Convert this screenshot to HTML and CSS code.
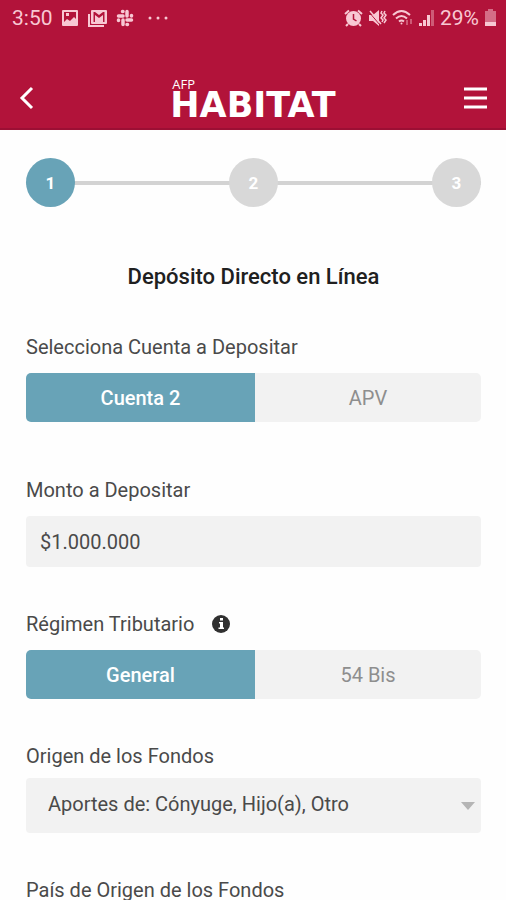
FILE: index.html
```html
<!DOCTYPE html>
<html lang="es">
<head>
<meta charset="utf-8">
<meta name="viewport" content="width=device-width, initial-scale=1">
<title>Depósito Directo en Línea</title>
<link rel="stylesheet" href="styles.css">
</head>
<body>
<header class="top">
  <div class="status">
    <div class="status-group status-left">
      <span class="clock">3:50</span>
      <svg width="18" height="18" viewBox="0 0 18 18"><path fill="currentColor" fill-rule="evenodd" d="M2 1h14a1 1 0 0 1 1 1v14a1 1 0 0 1-1 1H2a1 1 0 0 1-1-1V2a1 1 0 0 1 1-1zM3 3v10l3-3 3 2 4-4 2 2V3zM5 4h3v3H5z"/></svg>
      <svg width="21" height="19" viewBox="0 0 21 19"><path fill="none" stroke="currentColor" stroke-width="2" d="M2 5v12h15"/><path fill="currentColor" fill-rule="evenodd" d="M5 1h14a1 1 0 0 1 1 1v12a1 1 0 0 1-1 1H5a1 1 0 0 1-1-1V2a1 1 0 0 1 1-1zM6.500 3v10H8V6l4 3 4-3v7h1.500V3H16l-4 3-4-3z"/></svg>
      <svg width="18" height="18" viewBox="0 0 18 18" fill="none" stroke="currentColor" stroke-width="3.500" stroke-linecap="round"><path d="M7 7H2.500M11 7V2.500M11 11h4.500M7 11v4.500"/><path d="M6.500 2.500h.5M15.500 6.500v.5M11 15.500h.5M2.500 11v.5"/></svg>
      <svg class="more" width="20" height="4" viewBox="0 0 20 4" fill="currentColor"><circle cx="2" cy="2" r="1.500"/><circle cx="10" cy="2" r="1.500"/><circle cx="18" cy="2" r="1.500"/></svg>
    </div>
    <div class="status-group">
      <svg width="19" height="18" viewBox="0 0 19 18"><circle cx="9.500" cy="9.500" r="7.500" fill="currentColor"/><path d="M9.500 5v5l3 2" fill="none" stroke="#b2133a" stroke-width="1.500"/><path d="M1 5l4-3.500M18 5l-4-3.500M4 15l-2 2M15 15l2 2" stroke="currentColor" stroke-width="2"/></svg>
      <svg width="19" height="18" viewBox="0 0 19 18"><path fill="currentColor" d="M1 6h4l6-5v16l-6-5H1z"/><path d="M1 3l11 13" stroke="#b2133a" stroke-width="1"/><path d="M2 2l11 13" stroke="currentColor" stroke-width="1.500"/><path d="M14 2l-1 2 2 2-2 3 2 2-1 2M17 2l-1 2 2 2-2 3 2 2-2 3" fill="none" stroke="currentColor" stroke-width="1.500"/></svg>
      <svg width="22" height="18" viewBox="0 0 22 18" fill="none" stroke="currentColor" stroke-width="2"><path d="M1 6q8.500-8 17 0M4 9.500q5.500-5 11 0M7 12.500q2.500-2 5 0"/><circle cx="9.500" cy="14.500" r="1" fill="currentColor" stroke="none"/><path d="M15 11v5M19 10v5" opacity=".4"/></svg>
      <svg width="16" height="18" viewBox="0 0 16 18" fill="currentColor"><path d="M0 14h3v3H0zM4 11h3v6H4zM8 6h3v11H8z"/><path d="M12 1h3v16h-3z" opacity=".4"/></svg>
      <span class="battery-text">29%</span>
      <svg width="13" height="18" viewBox="0 0 13 18" fill="currentColor"><path opacity=".5" d="M4 0h5v2h3v11H1V2h3z"/><path d="M1 13h11v4H1z"/></svg>
    </div>
  </div>
  <nav class="bar">
    <button class="icon-button" type="button" aria-label="Volver"><svg width="15" height="24" viewBox="0 0 15 24"><path d="M13 2L3 12l10 10" fill="none" stroke="currentColor" stroke-width="3"/></svg></button>
    <a class="logo" href="#">
      <span class="logo-afp">AFP</span>
      <span class="logo-name">HABITAT</span>
    </a>
    <button class="icon-button" type="button" aria-label="Menú"><svg width="23" height="24" viewBox="0 0 23 24"><path d="M0 3h23M0 12h23M0 21h23" stroke="currentColor" stroke-width="3"/></svg></button>
  </nav>
</header>
<main class="content">
  <ol class="steps">
    <li class="step active">1</li>
    <li class="step">2</li>
    <li class="step">3</li>
  </ol>
  <h1 class="title">Depósito Directo en Línea</h1>
  <form class="form">
    <section class="field account" role="group" aria-labelledby="account-label">
      <span class="label" id="account-label">Selecciona Cuenta a Depositar</span>
      <div class="segments">
        <button class="segment selected" type="button" aria-pressed="true">Cuenta 2</button>
        <button class="segment" type="button" aria-pressed="false">APV</button>
      </div>
    </section>
    <section class="field amount">
      <label class="label" for="amount">Monto a Depositar</label>
      <input class="input" id="amount" type="text" value="$1.000.000">
    </section>
    <section class="field" role="group" aria-labelledby="tax-label">
      <div class="label-row">
        <span class="label" id="tax-label">Régimen Tributario</span>
        <button class="info" type="button" aria-label="Información"><svg width="18" height="18" viewBox="0 0 18 18"><circle cx="9" cy="9" r="9" fill="#303030"/><path fill="#fff" d="M8 3h3v2.500H8zM7 7h4v5.500h1V14H6.500v-1.500H8v-4H7z"/></svg></button>
      </div>
      <div class="segments">
        <button class="segment selected" type="button" aria-pressed="true">General</button>
        <button class="segment" type="button" aria-pressed="false">54 Bis</button>
      </div>
    </section>
    <section class="field source">
      <label class="label" for="source">Origen de los Fondos</label>
      <div class="select-wrap">
        <select class="select" id="source"><option>Aportes de: Cónyuge, Hijo(a), Otro</option></select>
        <svg class="caret" width="14" height="8" viewBox="0 0 14 8"><path d="M0 0h14L7 8z" fill="#b5b5b5"/></svg>
      </div>
    </section>
    <section class="field">
      <span class="label">País de Origen de los Fondos</span>
    </section>
  </form>
</main>
</body>
</html>
```
FILE: styles.css
```css
* { box-sizing: border-box; }

body {
  margin: 0;
  background: #fefefe;
  color: #4a4a4a;
  font: 20px/20px Roboto, "Liberation Sans", sans-serif;
}

button, input, select {
  margin: 0;
  border: 0;
  font: inherit;
  color: inherit;
}

svg { display: block; flex: none; }

.top {
  background: #b2133a;
  border-bottom: 2px solid #9c0f34;
  color: #fff;
}

.status {
  display: flex;
  justify-content: space-between;
  padding: 8px 9px 8px 12px;
  color: #f8c8d3;
}

.status-group { display: flex; align-items: center; gap: 5px; }
.status-left { gap: 8px; }
.clock, .battery-text { font-size: 21px; }
.more { margin-left: 6px; }

.bar {
  display: grid;
  grid-template-columns: 1fr auto 1fr;
  align-items: center;
  padding: 42px 19px 10px;
}

.icon-button {
  justify-self: start;
  padding: 0;
  background: none;
}

.icon-button:last-child { justify-self: end; }

.logo {
  display: grid;
  gap: 2px;
  color: #fff;
  text-decoration: none;
}

.logo-afp { padding-left: 2px; font: 13px/12px "Open Sans", sans-serif; }
.logo-name { font: 700 35px/26px "DejaVu Sans", sans-serif; }

.content { padding: 28px 25px 0 26px; }

.steps {
  display: flex;
  justify-content: space-between;
  margin: 0;
  padding: 0;
  list-style: none;
  background: linear-gradient(#d3d3d3, #d3d3d3) center / 100% 4px no-repeat;
}

.step {
  display: grid;
  place-items: center;
  width: 49px;
  height: 49px;
  border-radius: 50%;
  background: #d8d8d8;
  color: #fff;
  font-size: 17px;
  font-weight: 700;
}

.step.active { background: #68a3b7; }

.title {
  margin: 60px 0 50px;
  color: #202020;
  font-size: 22px;
  font-weight: 500;
  line-height: 20px;
  text-align: center;
}

.form { display: grid; gap: 47px; }
.field { display: grid; gap: 16px; }
.account { margin-bottom: 11px; }
.source { gap: 12px; }
.label-row { display: flex; align-items: center; gap: 18px; }
.info { padding: 0; background: none; }

.segments {
  display: grid;
  grid-template-columns: 229fr 226fr;
  overflow: hidden;
  border-radius: 5px;
}

.segment {
  height: 49px;
  padding: 0;
  background: #f2f2f2;
  color: #8e8e8e;
}

.segment.selected {
  background: #68a3b7;
  color: #fff;
  font-weight: 500;
}

.input, .select {
  width: 100%;
  border-radius: 4px;
  background: #f2f2f2;
}

.input { height: 51px; padding: 0 14px; }

.select-wrap { display: grid; align-items: center; }

.select, .caret { grid-area: 1 / 1; }

.select {
  height: 55px;
  padding: 0 32px 4px 22px;
  line-height: 26px;
  appearance: none;
}

.caret { justify-self: end; margin-right: 6px; pointer-events: none; }
```
